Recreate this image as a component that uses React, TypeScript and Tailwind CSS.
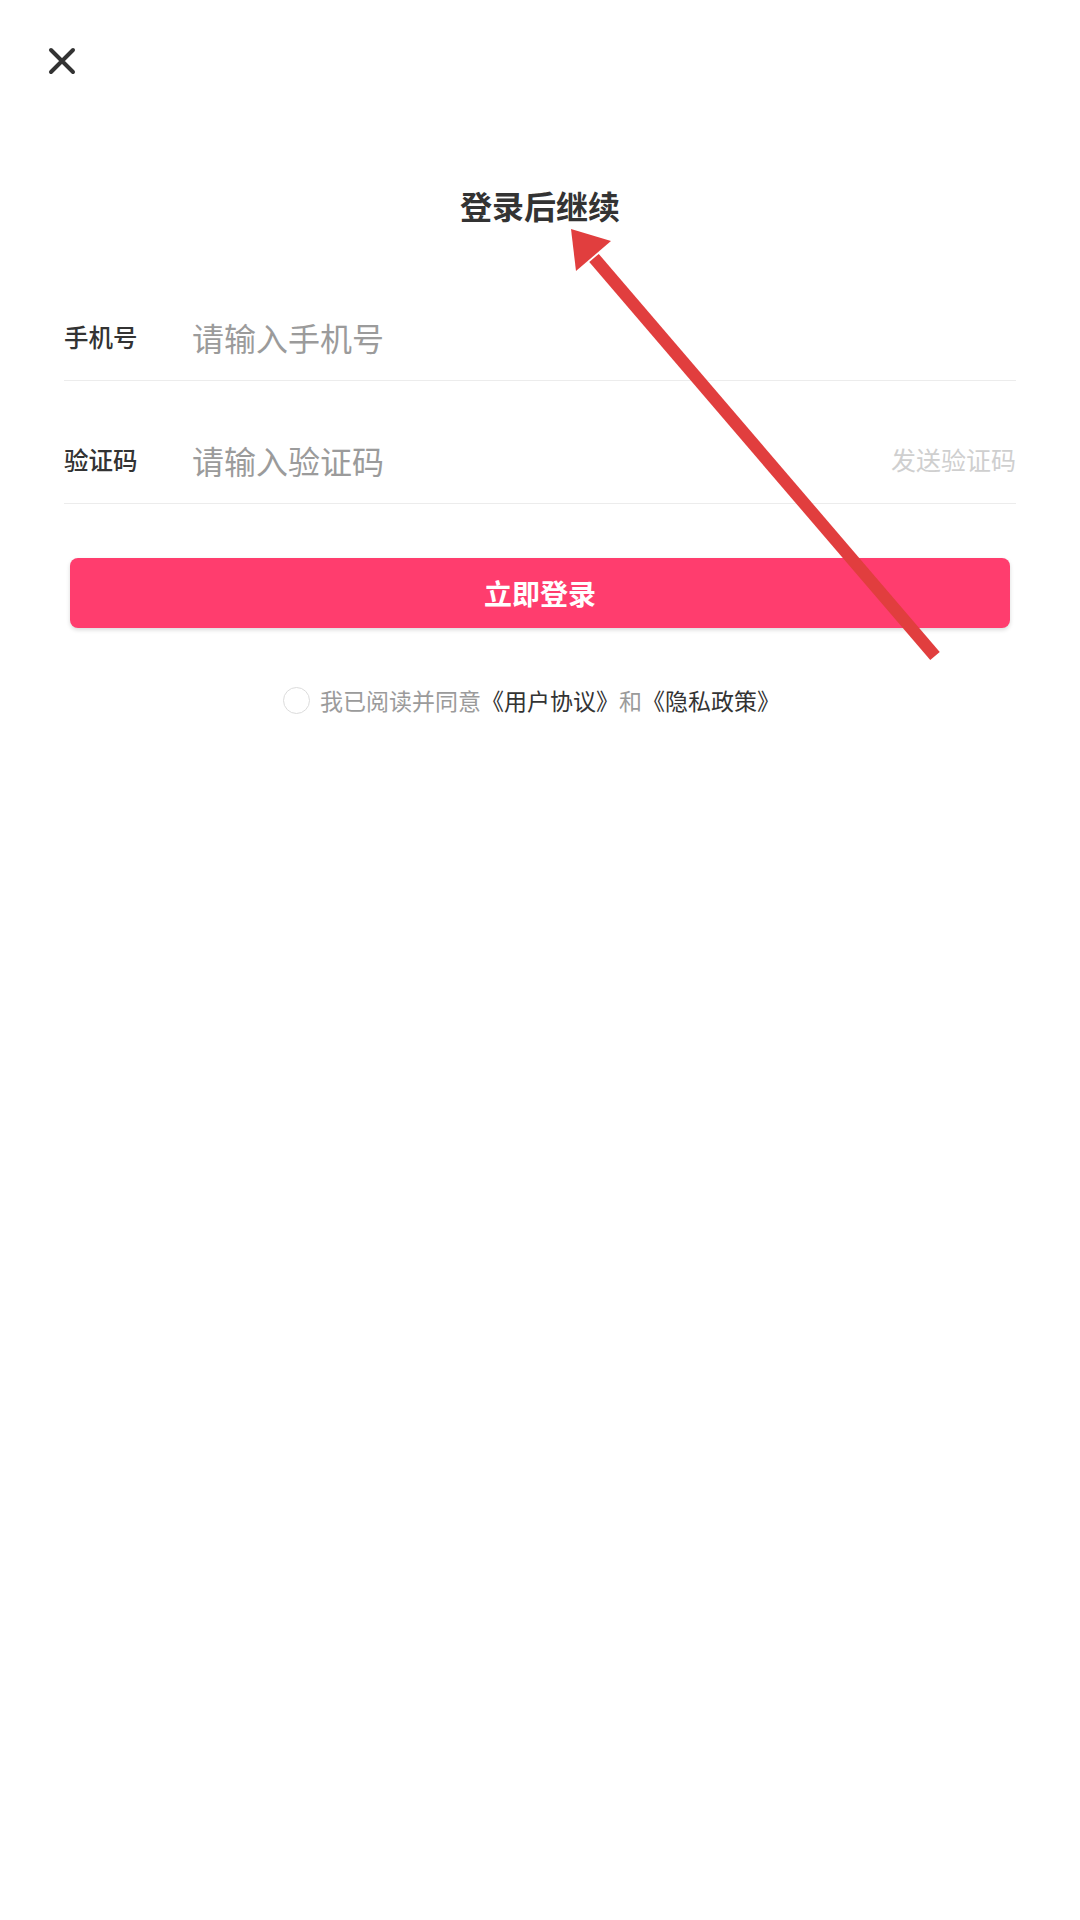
const cjk = { fontFamily: '"Noto Sans CJK SC", "Noto Sans", sans-serif' };

function CloseIcon() {
  return (
    <svg width="28" height="28" viewBox="0 0 28 28" fill="none">
      <path
        d="M3 3 L25 25 M25 3 L3 25"
        stroke="#333333"
        strokeWidth="4"
        strokeLinecap="round"
      />
    </svg>
  );
}

function FieldRow({
  label,
  placeholder,
  action,
  tall = true,
}: {
  label: string;
  placeholder: string;
  action?: string;
  tall?: boolean;
}) {
  return (
    <div
      className={
        "flex items-end border-b border-[#ececec] " + (tall ? "h-[125px]" : "h-[123px]")
      }
    >
      <div className="mb-[23px] flex h-[40px] w-full items-center">
        <span className="w-[128px] shrink-0 text-[24.5px] font-medium text-[#333333]">
          {label}
        </span>
        <input
          className="min-w-0 flex-1 bg-transparent text-[32px] text-[#333] outline-none placeholder:text-[#9b9b9b]"
          placeholder={placeholder}
          style={cjk}
        />
        {action && (
          <span className="shrink-0 text-[25px] text-[#cfcfcf]">{action}</span>
        )}
      </div>
    </div>
  );
}

export default function App() {
  return (
    <div className="relative h-[1920px] w-[1080px] overflow-hidden bg-white" style={cjk}>
      <div className="pl-[48px] pt-[47px]">
        <CloseIcon />
      </div>

      <h1 className="mt-[110px] text-center text-[32px] font-bold leading-[40px] text-[#333333]">
        登录后继续
      </h1>

      <div className="mt-[31px] px-[64px]">
        <FieldRow label="手机号" placeholder="请输入手机号" />
        <FieldRow label="验证码" placeholder="请输入验证码" action="发送验证码" tall={false} />

        <button className="mx-[6px] mt-[54px] flex h-[70px] w-[940px] items-center justify-center rounded-[8px] bg-[#ff3d6e] text-[28px] font-bold text-white shadow-[0_2px_4px_rgba(0,0,0,0.15)]">
          立即登录
        </button>

        <div className="mt-[58px] flex items-center justify-center pr-[17px]">
          <span className="h-[27px] w-[27px] shrink-0 rounded-full border border-[#dcdcdc]" />
          <p className="ml-[10px] text-[23px] leading-[28px] text-[#9b9b9b]">
            我已阅读并同意<span className="text-[#333333]">《用户协议》</span>和
            <span className="text-[#333333]">《隐私政策》</span>
          </p>
        </div>
      </div>

      {/* annotation arrow */}
      <svg
        className="pointer-events-none absolute left-0 top-0"
        width="1080"
        height="1920"
        viewBox="0 0 1080 1920"
      >
        <line x1="935" y1="656" x2="594" y2="258" stroke="#e13e3e" strokeWidth="12.5" />
        <polygon points="571,229 611,241 576,271" fill="#e13e3e" />
      </svg>
    </div>
  );
}
